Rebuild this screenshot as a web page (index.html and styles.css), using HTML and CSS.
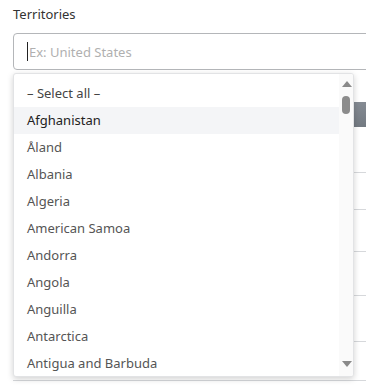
FILE: index.html
```html
<!DOCTYPE html>
<html lang="en">
<head>
  <meta charset="UTF-8">
  <meta name="viewport" content="width=device-width, initial-scale=1.0">
  <title>Territories</title>
  <link rel="stylesheet" href="styles.css">
</head>
<body>

<div class="page">
  <label class="label">Territories</label>
  <div class="search">
    <span class="caret"></span>
    <span class="placeholder">Ex: United States</span>
  </div>

  <table class="grid">
    <thead>
      <tr><th></th></tr>
    </thead>
    <tbody>
      <tr class="r1"><td></td></tr>
      <tr class="r2"><td></td></tr>
      <tr class="r3"><td></td></tr>
      <tr class="r4"><td></td></tr>
      <tr class="r5"><td></td></tr>
      <tr class="r6"><td></td></tr>
    </tbody>
  </table>

  <div class="dropdown">
    <ul class="options">
      <li>&ndash; Select all &ndash;</li>
      <li class="active">Afghanistan</li>
      <li>Åland</li>
      <li>Albania</li>
      <li>Algeria</li>
      <li>American Samoa</li>
      <li>Andorra</li>
      <li>Angola</li>
      <li>Anguilla</li>
      <li>Antarctica</li>
      <li>Antigua and Barbuda</li>
    </ul>
    <div class="scrollbar">
      <span class="arrow up"></span>
      <span class="thumb"></span>
      <span class="arrow down"></span>
    </div>
  </div>
</div>

</body>
</html>
```

FILE: styles.css
```css
body {
  margin: 0;
  font-family: "Noto Sans", "Open Sans", sans-serif;
  font-size: 13px;
  color: #333;
  background-color: #fff;
  overflow: hidden;
}
.page {
  position: relative;
  width: 366px;
  height: 386px;
  padding: 4px 0 0 13px;
  box-sizing: border-box;
  overflow: hidden;
}
.label {
  display: block;
  color: #333;
  line-height: 20px;
}
.search {
  position: relative;
  margin-top: 9px;
  height: 35px;
  width: 380px;
  border: 1px solid #b4b6b9;
  border-radius: 4px;
  display: flex;
  align-items: center;
  padding-left: 13px;
  box-sizing: content-box;
}
.caret {
  width: 1px;
  height: 19px;
  background-color: #222;
  margin-right: 1px;
}
.placeholder {
  color: #b0b0b0;
}
.grid {
  width: 380px;
  margin-top: 32px;
  border-collapse: collapse;
}
.grid th {
  height: 25px;
  padding: 0;
  background: linear-gradient(#858b93, #737a82);
}
.grid td {
  padding: 0;
  border-bottom: 1px solid #d6d8db;
}
.r1 td { height: 45px; }
.r2 td { height: 36px; }
.r3 td { height: 41px; }
.r4 td { height: 43px; }
.r5 td { height: 45px; }
.r6 td { height: 38px; }
.dropdown {
  position: absolute;
  top: 73px;
  left: 13px;
  width: 341px;
  height: 304px;
  background-color: #fff;
  border: 1px solid #e2e3e5;
  border-radius: 3px;
  box-sizing: border-box;
  box-shadow: 0 2px 6px rgba(0, 0, 0, 0.18);
  display: flex;
  overflow: hidden;
}
.options {
  flex: 1;
  list-style: none;
  margin: 0;
  padding: 6px 0 0;
}
.options li {
  height: 27px;
  line-height: 27px;
  padding-left: 13px;
  color: #555;
  white-space: nowrap;
}
.options li:first-child {
  color: #444;
}
.options li.active {
  background-color: #f4f5f7;
  color: #222;
}
.scrollbar {
  width: 14px;
  background-color: #fafafa;
  position: relative;
}
.arrow {
  position: absolute;
  left: 3px;
  width: 0;
  height: 0;
  border-left: 5px solid transparent;
  border-right: 5px solid transparent;
}
.arrow.up {
  top: 7px;
  border-bottom: 6px solid #8a8a8a;
}
.arrow.down {
  bottom: 9px;
  border-top: 6px solid #8a8a8a;
}
.thumb {
  position: absolute;
  top: 22px;
  left: 3px;
  width: 8px;
  height: 18px;
  border-radius: 4px;
  background-color: #8c8c8c;
}
```
